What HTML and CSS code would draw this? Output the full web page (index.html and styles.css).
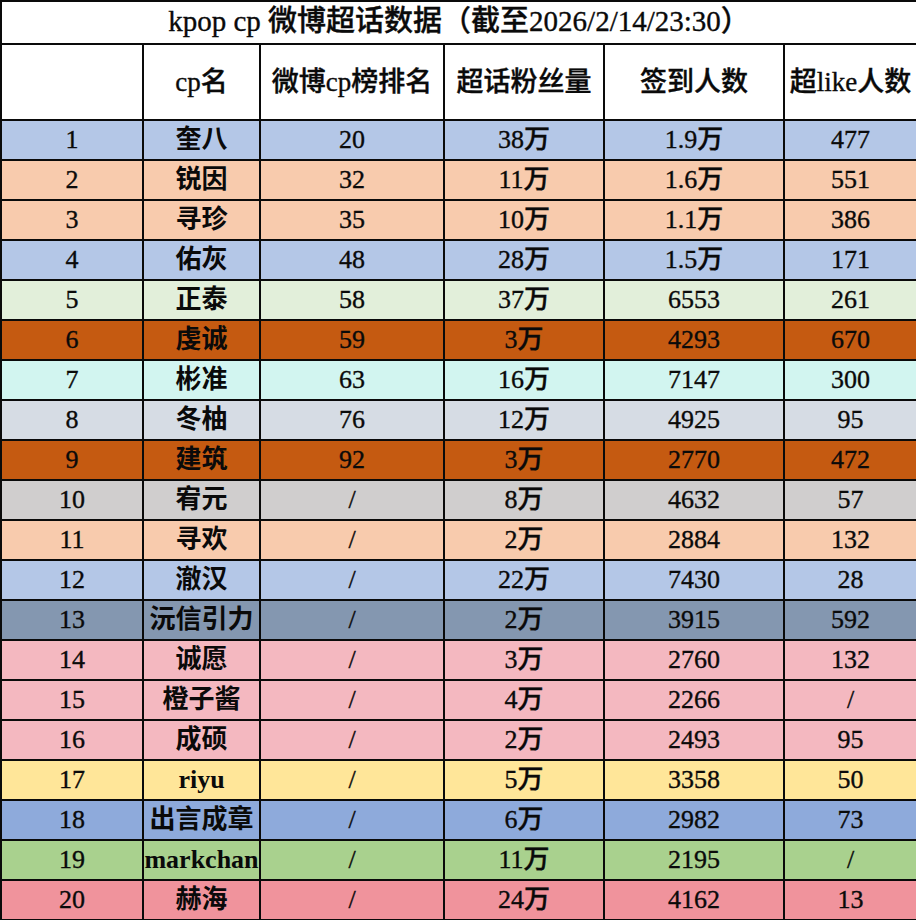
FILE: index.html
```html
<!DOCTYPE html>
<html lang="zh-CN">
<head>
<meta charset="utf-8">
<title>kpop cp 微博超话数据</title>
<link rel="stylesheet" href="styles.css">
</head>
<body>
<table class="sheet">
  <colgroup>
    <col class="c-rank"><col class="c-name"><col class="c-list"><col class="c-fans"><col class="c-sign"><col class="c-like">
  </colgroup>
  <tr class="title-row"><td colspan="6">kpop cp 微博超话数据（截至2026/2/14/23:30）</td></tr>
  <tr class="head-row"><td></td><td>cp名</td><td>微博cp榜排名</td><td>超话粉丝量</td><td>签到人数</td><td>超like人数</td></tr>
  <tr class="r-blue"><td>1</td><td class="nm">奎八</td><td>20</td><td>38万</td><td>1.9万</td><td>477</td></tr>
  <tr class="r-peach"><td>2</td><td class="nm">锐因</td><td>32</td><td>11万</td><td>1.6万</td><td>551</td></tr>
  <tr class="r-peach"><td>3</td><td class="nm">寻珍</td><td>35</td><td>10万</td><td>1.1万</td><td>386</td></tr>
  <tr class="r-blue"><td>4</td><td class="nm">佑灰</td><td>48</td><td>28万</td><td>1.5万</td><td>171</td></tr>
  <tr class="r-mint"><td>5</td><td class="nm">正泰</td><td>58</td><td>37万</td><td>6553</td><td>261</td></tr>
  <tr class="r-orange"><td>6</td><td class="nm">虔诚</td><td>59</td><td>3万</td><td>4293</td><td>670</td></tr>
  <tr class="r-cyan"><td>7</td><td class="nm">彬准</td><td>63</td><td>16万</td><td>7147</td><td>300</td></tr>
  <tr class="r-lav"><td>8</td><td class="nm">冬柚</td><td>76</td><td>12万</td><td>4925</td><td>95</td></tr>
  <tr class="r-orange"><td>9</td><td class="nm">建筑</td><td>92</td><td>3万</td><td>2770</td><td>472</td></tr>
  <tr class="r-gray"><td>10</td><td class="nm">宥元</td><td>/</td><td>8万</td><td>4632</td><td>57</td></tr>
  <tr class="r-peach"><td>11</td><td class="nm">寻欢</td><td>/</td><td>2万</td><td>2884</td><td>132</td></tr>
  <tr class="r-blue"><td>12</td><td class="nm">澈汉</td><td>/</td><td>22万</td><td>7430</td><td>28</td></tr>
  <tr class="r-slate"><td>13</td><td class="nm">沅信引力</td><td>/</td><td>2万</td><td>3915</td><td>592</td></tr>
  <tr class="r-pink"><td>14</td><td class="nm">诚愿</td><td>/</td><td>3万</td><td>2760</td><td>132</td></tr>
  <tr class="r-pink"><td>15</td><td class="nm">橙子酱</td><td>/</td><td>4万</td><td>2266</td><td>/</td></tr>
  <tr class="r-pink"><td>16</td><td class="nm">成硕</td><td>/</td><td>2万</td><td>2493</td><td>95</td></tr>
  <tr class="r-yellow"><td>17</td><td class="nm">riyu</td><td>/</td><td>5万</td><td>3358</td><td>50</td></tr>
  <tr class="r-cblue"><td>18</td><td class="nm">出言成章</td><td>/</td><td>6万</td><td>2982</td><td>73</td></tr>
  <tr class="r-green"><td>19</td><td class="nm">markchan</td><td>/</td><td>11万</td><td>2195</td><td>/</td></tr>
  <tr class="r-rose"><td>20</td><td class="nm">赫海</td><td>/</td><td>24万</td><td>4162</td><td>13</td></tr>
</table>
</body>
</html>
```

FILE: styles.css
```css
html, body {
  margin: 0;
  padding: 0;
  background: #ffffff;
}

.sheet {
  width: 916px;
  border-collapse: collapse;
  table-layout: fixed;
  font-family: "Liberation Serif", "Noto Sans CJK SC", serif;
  font-size: 26px;
  font-weight: 500;
  color: #0a0a0a;
  -webkit-text-stroke: 0.35px #0a0a0a;
}

.c-rank { width: 142px; }
.c-name { width: 117px; }
.c-list { width: 184px; }
.c-fans { width: 160px; }
.c-sign { width: 180px; }
.c-like { width: 133px; }

.sheet td {
  border: 2px solid #0a0a0a;
  text-align: center;
  vertical-align: middle;
  padding: 0;
  white-space: nowrap;
  overflow: hidden;
  line-height: 1;
}

.sheet tr { height: 40px; }
.sheet .title-row { height: 43px; }
.sheet .head-row { height: 76px; }

.sheet .title-row td { font-size: 29px; padding-bottom: 2px; }
.sheet .head-row td { font-size: 27px; }

.sheet .nm { font-weight: 700; -webkit-text-stroke: 0; }

.r-blue { background: #b4c7e7; }
.r-peach { background: #f8cbad; }
.r-mint { background: #e2efda; }
.r-orange { background: #c55a11; }
.r-cyan { background: #d2f5f0; }
.r-lav { background: #d6dce4; }
.r-gray { background: #d0cece; }
.r-slate { background: #8497b0; }
.r-pink { background: #f4b8c0; }
.r-yellow { background: #ffe699; }
.r-cblue { background: #8eaadb; }
.r-green { background: #a9d18e; }
.r-rose { background: #f0939c; }
```
